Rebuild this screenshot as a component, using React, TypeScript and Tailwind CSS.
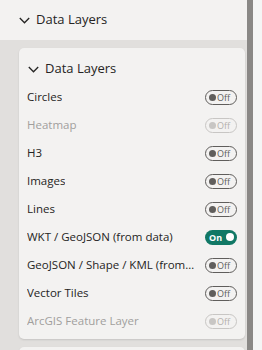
import React from "react";

type Row = { label: string; on?: boolean; disabled?: boolean };

const rows: Row[] = [
  { label: "Circles" },
  { label: "Heatmap", disabled: true },
  { label: "H3" },
  { label: "Images" },
  { label: "Lines" },
  { label: "WKT / GeoJSON (from data)", on: true },
  { label: "GeoJSON / Shape / KML (from data)" },
  { label: "Vector Tiles" },
  { label: "ArcGIS Feature Layer", disabled: true },
];

function Chevron() {
  return (
    <svg width="11" height="7" viewBox="0 0 11 7" className="shrink-0">
      <path d="M0.8 1 L5.5 5.8 L10.2 1" fill="none" stroke="#252423" strokeWidth="1.3" />
    </svg>
  );
}

function Toggle({ on, disabled }: { on?: boolean; disabled?: boolean }) {
  if (on) {
    return (
      <div className="w-[32px] h-[15px] rounded-full bg-[#117865] flex items-center justify-between pl-[4px] pr-[3px]">
        <span className="text-[9px] font-bold text-white leading-none">On</span>
        <span className="w-[8px] h-[8px] rounded-full bg-white" />
      </div>
    );
  }
  const c = disabled ? "border-[#c8c6c4]" : "border-[#605e5c]";
  const k = disabled ? "bg-[#c8c6c4]" : "bg-[#605e5c]";
  const t = disabled ? "text-[#b3b0ad]" : "text-[#605e5c]";
  return (
    <div className={`w-[32px] h-[15px] rounded-full border ${c} flex items-center pl-[3px] gap-[1px]`}>
      <span className={`w-[7px] h-[7px] rounded-full ${k}`} />
      <span className={`text-[9px] leading-none ${t}`}>Off</span>
    </div>
  );
}

export default function App() {
  return (
    <div
      className="w-[262px] h-[350px] flex overflow-hidden bg-[#f5f5f5]"
      style={{ fontFamily: '"Segoe UI", "Open Sans", "Noto Sans", sans-serif' }}
    >
      <div className="w-[247px] h-[350px] flex flex-col overflow-hidden">
        <div className="h-[40px] shrink-0 bg-[#f3f2f1] flex items-center gap-[6px] pl-[19px]">
          <Chevron />
          <span className="text-[13px] font-medium text-[#252423]">Data Layers</span>
        </div>
        <div className="flex-1 min-h-0 bg-[#e1dfdd] pl-[19px] pr-[2px] pt-[8px] flex flex-col gap-[8px] overflow-hidden">
          <div className="shrink-0 bg-[#f3f2f1] rounded-[5px] shadow-[0_1px_2px_rgba(0,0,0,0.12)] pt-[7px] pb-[4px] pl-[8px] pr-[8px]">
            <div className="h-[28px] flex items-center gap-[6px] pl-[1px]">
              <Chevron />
              <span className="text-[13px] font-medium text-[#252423]">Data Layers</span>
            </div>
            {rows.map((r) => (
              <div key={r.label} className="h-[28px] flex items-center justify-between gap-[10px]">
                <span
                  className={`min-w-0 text-[11.5px] truncate ${r.disabled ? "text-[#a19f9d]" : "text-[#252423]"}`}
                >
                  {r.label}
                </span>
                <div className="shrink-0">
                  <Toggle on={r.on} disabled={r.disabled} />
                </div>
              </div>
            ))}
          </div>
          <div className="shrink-0 bg-[#f3f2f1] rounded-[5px] h-[40px] shadow-[0_1px_2px_rgba(0,0,0,0.12)]" />
        </div>
      </div>
      <div className="w-[6px] shrink-0 bg-[#8a8886]" />
      <div className="flex-1 bg-[#f5f5f5]" />
    </div>
  );
}
